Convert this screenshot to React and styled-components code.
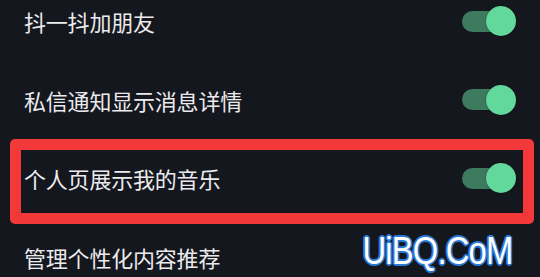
import React from "react";
import styled, { createGlobalStyle } from "styled-components";

const Global = createGlobalStyle`
  html, body { margin: 0; padding: 0; background: #15171f; }
  body { width: 540px; height: 277px; overflow: hidden; }
  #root { width: 540px; height: 277px; overflow: hidden; }
`;

const Page = styled.div`
  width: 540px;
  height: 277px;
  background: #15171f;
  overflow: hidden;
  position: relative;
  font-family: "Noto Sans CJK SC", "Noto Sans", sans-serif;
`;

const List = styled.div`
  display: flex;
  flex-direction: column;
  margin-top: -18px;
`;

const Row = styled.div`
  position: relative;
  height: 78.5px;
  display: flex;
  align-items: center;
  justify-content: space-between;
  padding: 0 24px 0 24px;
  box-sizing: border-box;
`;

const Label = styled.span`
  color: #ebebed;
  font-size: 22px;
  line-height: 1;
  letter-spacing: -0.2px;
`;

const Switch = styled.div`
  position: relative;
  width: 54px;
  height: 30px;
  display: flex;
  align-items: center;
`;

const Track = styled.div`
  width: 46px;
  height: 21px;
  border-radius: 10.5px;
  background: #3e7a5d;
`;

const Knob = styled.div`
  position: absolute;
  right: 0;
  top: 0;
  width: 30px;
  height: 30px;
  border-radius: 50%;
  background: #63d89c;
  box-shadow: 0 0 2px rgba(0, 0, 0, 0.4);
`;

const Highlight = styled.div`
  position: absolute;
  left: 10px;
  right: 6px;
  top: 0px;
  bottom: -6px;
  border: 11px solid #f23838;
  border-radius: 5px;
  pointer-events: none;
`;

const Watermark = styled.div`
  position: absolute;
  right: 28px;
  top: 231px;
  font-family: "Liberation Sans", "DejaVu Sans", sans-serif;
  font-size: 39px;
  line-height: 1;
  letter-spacing: -1px;
  color: #ffffff;
  text-shadow:
    2px 0 0 #2a78d6, -2px 0 0 #2a78d6, 0 2px 0 #2a78d6, 0 -2px 0 #2a78d6,
    1.4px 1.4px 0 #2a78d6, -1.4px -1.4px 0 #2a78d6, 1.4px -1.4px 0 #2a78d6, -1.4px 1.4px 0 #2a78d6;
  transform: scaleX(0.84);
  transform-origin: right center;
`;

const items = [
  { label: "抖一抖加朋友" },
  { label: "私信通知显示消息详情" },
  { label: "个人页展示我的音乐", highlight: true },
  { label: "管理个性化内容推荐", noSwitch: true },
];

export default function App() {
  return (
    <>
      <Global />
      <Page>
        <List>
          {items.map((it) => (
            <Row key={it.label}>
              <Label>{it.label}</Label>
              {!it.noSwitch && (
                <Switch>
                  <Track />
                  <Knob />
                </Switch>
              )}
              {it.highlight && <Highlight />}
            </Row>
          ))}
        </List>
        <Watermark>UiBQ.CoM</Watermark>
      </Page>
    </>
  );
}
